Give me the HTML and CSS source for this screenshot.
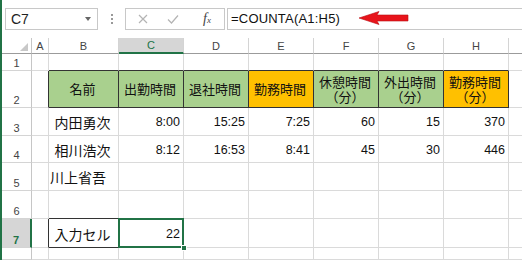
FILE: index.html
```html
<!DOCTYPE html>
<html lang="ja">
<head>
    <meta charset="UTF-8">
    <title>COUNTA</title>
    <link rel="stylesheet" href="styles.css">
</head>
<body>
    <div class="toolbar">
        <div class="namebox"><span>C7</span><span class="drop"></span></div>
        <div class="grip"><i></i><i></i><i></i></div>
        <div class="fxbox">
            <svg class="cancel" width="10" height="10" viewBox="0 0 10 10"><path d="M1 1L9 9M9 1L1 9" stroke="#b4b4b4" stroke-width="1.2" fill="none"/></svg>
            <svg class="enter" width="12" height="10" viewBox="0 0 12 10"><path d="M1 5.5L4.5 9L11 1.5" stroke="#b4b4b4" stroke-width="1.2" fill="none"/></svg>
            <span class="fx"><i>f</i><small>x</small></span>
        </div>
        <div class="formula">=COUNTA(A1:H5)</div>
    </div>
    <svg class="arrow" width="50" height="14" viewBox="0 0 50 14">
        <path d="M0 7L20 0.5L18 4L49 4L49 10L18 10L20 13.5Z" fill="#e8141b" stroke="#b80d12" stroke-width="0.6"/>
    </svg>

    <div class="sheet">
        <div class="ch corner"><span class="tri"></span></div>
        <div class="ch">A</div>
        <div class="ch">B</div>
        <div class="ch ch-sel">C</div>
        <div class="ch">D</div>
        <div class="ch">E</div>
        <div class="ch">F</div>
        <div class="ch">G</div>
        <div class="ch">H</div>
        <div class="ch last"></div>

        <div class="rh">1</div>
        <div class="c"></div>
        <div class="c bb"></div>
        <div class="c bb"></div>
        <div class="c bb"></div>
        <div class="c bb"></div>
        <div class="c bb"></div>
        <div class="c bb"></div>
        <div class="c bb"></div>
        <div class="c last"></div>

        <div class="rh">2</div>
        <div class="c br"></div>
        <div class="c hd green">名前</div>
        <div class="c hd green">出勤時間</div>
        <div class="c hd green">退社時間</div>
        <div class="c hd orange">勤務時間</div>
        <div class="c hd green">休憩時間<br>（分）</div>
        <div class="c hd green">外出時間<br>（分）</div>
        <div class="c hd orange">勤務時間<br>（分）</div>
        <div class="c last"></div>

        <div class="rh">3</div>
        <div class="c"></div>
        <div class="c mid">内田勇次</div>
        <div class="c num">8:00</div>
        <div class="c num">15:25</div>
        <div class="c num">7:25</div>
        <div class="c num">60</div>
        <div class="c num">15</div>
        <div class="c num">370</div>
        <div class="c last"></div>

        <div class="rh">4</div>
        <div class="c"></div>
        <div class="c mid">相川浩次</div>
        <div class="c num">8:12</div>
        <div class="c num">16:53</div>
        <div class="c num">8:41</div>
        <div class="c num">45</div>
        <div class="c num">30</div>
        <div class="c num">446</div>
        <div class="c last"></div>

        <div class="rh">5</div>
        <div class="c"></div>
        <div class="c left">川上省吾</div>
        <div class="c"></div>
        <div class="c"></div>
        <div class="c"></div>
        <div class="c"></div>
        <div class="c"></div>
        <div class="c"></div>
        <div class="c last"></div>

        <div class="rh">6</div>
        <div class="c"></div>
        <div class="c bb"></div>
        <div class="c bb"></div>
        <div class="c"></div>
        <div class="c"></div>
        <div class="c"></div>
        <div class="c"></div>
        <div class="c"></div>
        <div class="c last"></div>

        <div class="rh rh-sel">7</div>
        <div class="c br"></div>
        <div class="c box mid">入力セル</div>
        <div class="c box num active">22<span class="handle"></span></div>
        <div class="c"></div>
        <div class="c"></div>
        <div class="c"></div>
        <div class="c"></div>
        <div class="c"></div>
        <div class="c last"></div>

        <div class="rh"></div>
        <div class="c"></div>
        <div class="c"></div>
        <div class="c"></div>
        <div class="c"></div>
        <div class="c"></div>
        <div class="c"></div>
        <div class="c"></div>
        <div class="c"></div>
        <div class="c last"></div>
    </div>
</body>
</html>
```

FILE: styles.css
```css
* {
    box-sizing: border-box;
}

body {
    margin: 0;
    width: 522px;
    height: 260px;
    overflow: hidden;
    position: relative;
    background: #fff;
    border-left: 2px solid #217346;
    font-family: "Liberation Sans", "Noto Sans CJK JP", sans-serif;
    color: #111;
}

/* formula bar */
.toolbar {
    display: flex;
    height: 38px;
    padding: 8px 0 0 3px;
}

.namebox {
    width: 93px;
    height: 22px;
    border: 1px solid #c8c8c8;
    display: flex;
    align-items: center;
    justify-content: space-between;
    padding: 0 6px 0 5px;
    font-size: 14px;
    color: #222;
}

.drop {
    width: 0;
    height: 0;
    border-left: 3.5px solid transparent;
    border-right: 3.5px solid transparent;
    border-top: 4px solid #666;
}

.grip {
    width: 27px;
    height: 22px;
    display: flex;
    flex-direction: column;
    align-items: center;
    justify-content: center;
    gap: 2px;
}

.grip i {
    width: 2px;
    height: 2px;
    background: #999;
}

.fxbox {
    width: 100px;
    height: 22px;
    border: 1px solid #c8c8c8;
    display: flex;
    align-items: center;
    padding-left: 12px;
}

.enter {
    margin-left: 19px;
}

.fx {
    margin-left: 24px;
    font-family: "Liberation Serif", serif;
    font-size: 14px;
    color: #444;
}

.fx small {
    font-size: 9px;
    font-style: italic;
}

.formula {
    flex: 1;
    height: 22px;
    margin-left: 2px;
    border: 1px solid #c8c8c8;
    border-right: none;
    padding-left: 3px;
    font-size: 13px;
    letter-spacing: 0.2px;
    line-height: 20px;
}

.arrow {
    position: absolute;
    left: 357px;
    top: 11px;
}

/* grid */
.sheet {
    display: grid;
    grid-template-columns: 30px 17px 70px 65px 65px 65px 65px 65px 65px 1fr;
    grid-template-rows: 16px 17px 37px 28px 27px 28px 28px 29px 12px;
    font-size: 14px;
}

.ch {
    border-right: 1px solid #d4d4d4;
    border-bottom: 1px solid #9b9b9b;
    font-size: 11px;
    color: #444;
    display: flex;
    align-items: center;
    justify-content: center;
}

.corner {
    border-right-color: #c6c6c6;
    position: relative;
}

.tri {
    position: absolute;
    right: 3px;
    bottom: 2px;
    width: 0;
    height: 0;
    border-left: 8px solid transparent;
    border-bottom: 8px solid #c8c8c8;
}

.ch-sel {
    background: #d6d6d6;
    color: #217346;
    border-bottom: 2px solid #217346;
}

.rh {
    border-right: 1px solid #c6c6c6;
    border-bottom: 1px solid #d4d4d4;
    font-size: 11px;
    color: #444;
    display: flex;
    align-items: flex-end;
    justify-content: center;
    padding-bottom: 1px;
}

.rh-sel {
    background: #d6d6d6;
    color: #217346;
    font-weight: bold;
    border-right: 2px solid #217346;
}

.c {
    border-right: 1px solid #dadada;
    border-bottom: 1px solid #dadada;
    display: flex;
    align-items: center;
    padding: 1px 3px 0 1px;
}

.last {
    border-right: none;
}

.bb {
    border-bottom-color: #333;
}

.br {
    border-right-color: #333;
}

.hd {
    border-right-color: #333;
    border-bottom-color: #333;
    justify-content: center;
    text-align: center;
    font-size: 13px;
    line-height: 15px;
}

.green {
    background: #a9d08e;
}

.orange {
    background: #ffc000;
}

.mid {
    justify-content: center;
}

.num {
    justify-content: flex-end;
    font-size: 12.5px;
}

.box {
    border-right-color: #333;
    border-bottom-color: #333;
}

.active {
    position: relative;
}

.active::after {
    content: "";
    position: absolute;
    left: -1px;
    top: -1px;
    right: -1px;
    bottom: -1px;
    border: 2px solid #217346;
}

.handle {
    position: absolute;
    right: -4px;
    bottom: -4px;
    width: 6px;
    height: 6px;
    background: #217346;
    border: 1px solid #fff;
    z-index: 1;
}
```
